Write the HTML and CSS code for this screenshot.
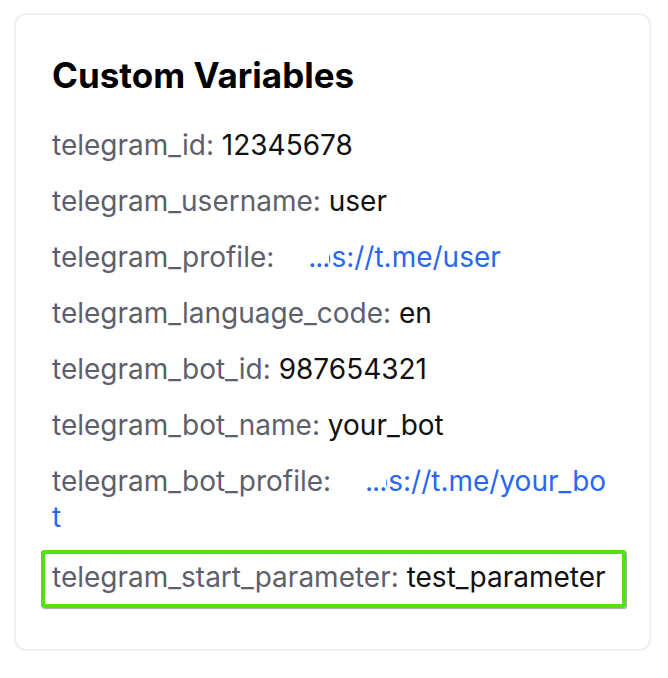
FILE: index.html
```html
<!DOCTYPE html>
<html lang="en">
<head>
  <meta charset="UTF-8" />
  <meta name="viewport" content="width=device-width, initial-scale=1.0"/>
  <title>Custom Variables</title>
  <link rel="stylesheet" href="styles.css">
</head>
<body>
  <div class="card">
    <h2>Custom Variables</h2>

    <div class="row"><span class="label">telegram_id:</span> <span class="value">12345678</span></div>
    <div class="row"><span class="label">telegram_username:</span> <span class="value">user</span></div>
    <div class="row"><span class="label">telegram_profile:</span> <a class="link" href="#"><span class="dots">...</span><span class="cut">p</span>s://t.me/user</a></div>
    <div class="row"><span class="label">telegram_language_code:</span> <span class="value">en</span></div>
    <div class="row"><span class="label">telegram_bot_id:</span> <span class="value">987654321</span></div>
    <div class="row"><span class="label">telegram_bot_name:</span> <span class="value">your_bot</span></div>
    <div class="row"><span class="label">telegram_bot_profile:</span> <a class="link" href="#"><span class="dots">...</span><span class="cut">p</span>s://t.me/your_bot</a></div>
    <div class="row highlight"><span class="label">telegram_start_parameter:</span> <span class="value">test_parameter</span></div>
  </div>
</body>
</html>
```

FILE: styles.css
```css
body {
  margin: 0;
  padding: 13px 17px 20px 14px;
  background: #fff;
  font-family: Inter, "Liberation Sans", sans-serif;
}
.card {
  border: 2px solid #efefef;
  border-radius: 12px;
  padding: 39px 34px 41px 36px;
}
.card h2 {
  margin: 0 0 31px 0;
  font-size: 35px;
  line-height: 42px;
  font-weight: 700;
  color: #000;
}
.row {
  font-size: 28px;
  line-height: 36px;
  margin-top: 20px;
  word-break: break-all;
}
.card h2 + .row {
  margin-top: 0;
}
.label {
  color: #5f5f6b;
}
.value {
  color: #111;
}
.link {
  color: #2b67ee;
  text-decoration: none;
  margin-left: 26px;
}
.dots {
  letter-spacing: -1px;
}
.cut {
  display: inline-block;
  width: 2px;
  overflow: hidden;
  direction: rtl;
  vertical-align: bottom;
}
.highlight {
  margin: 15px -11px 0 -11px;
  padding: 5px 7px 9px 7px;
  border: 4px solid #52e20c;
  border-radius: 3px;
  box-shadow: 1px 1px 1px rgba(0, 0, 0, 0.35);
}
```
